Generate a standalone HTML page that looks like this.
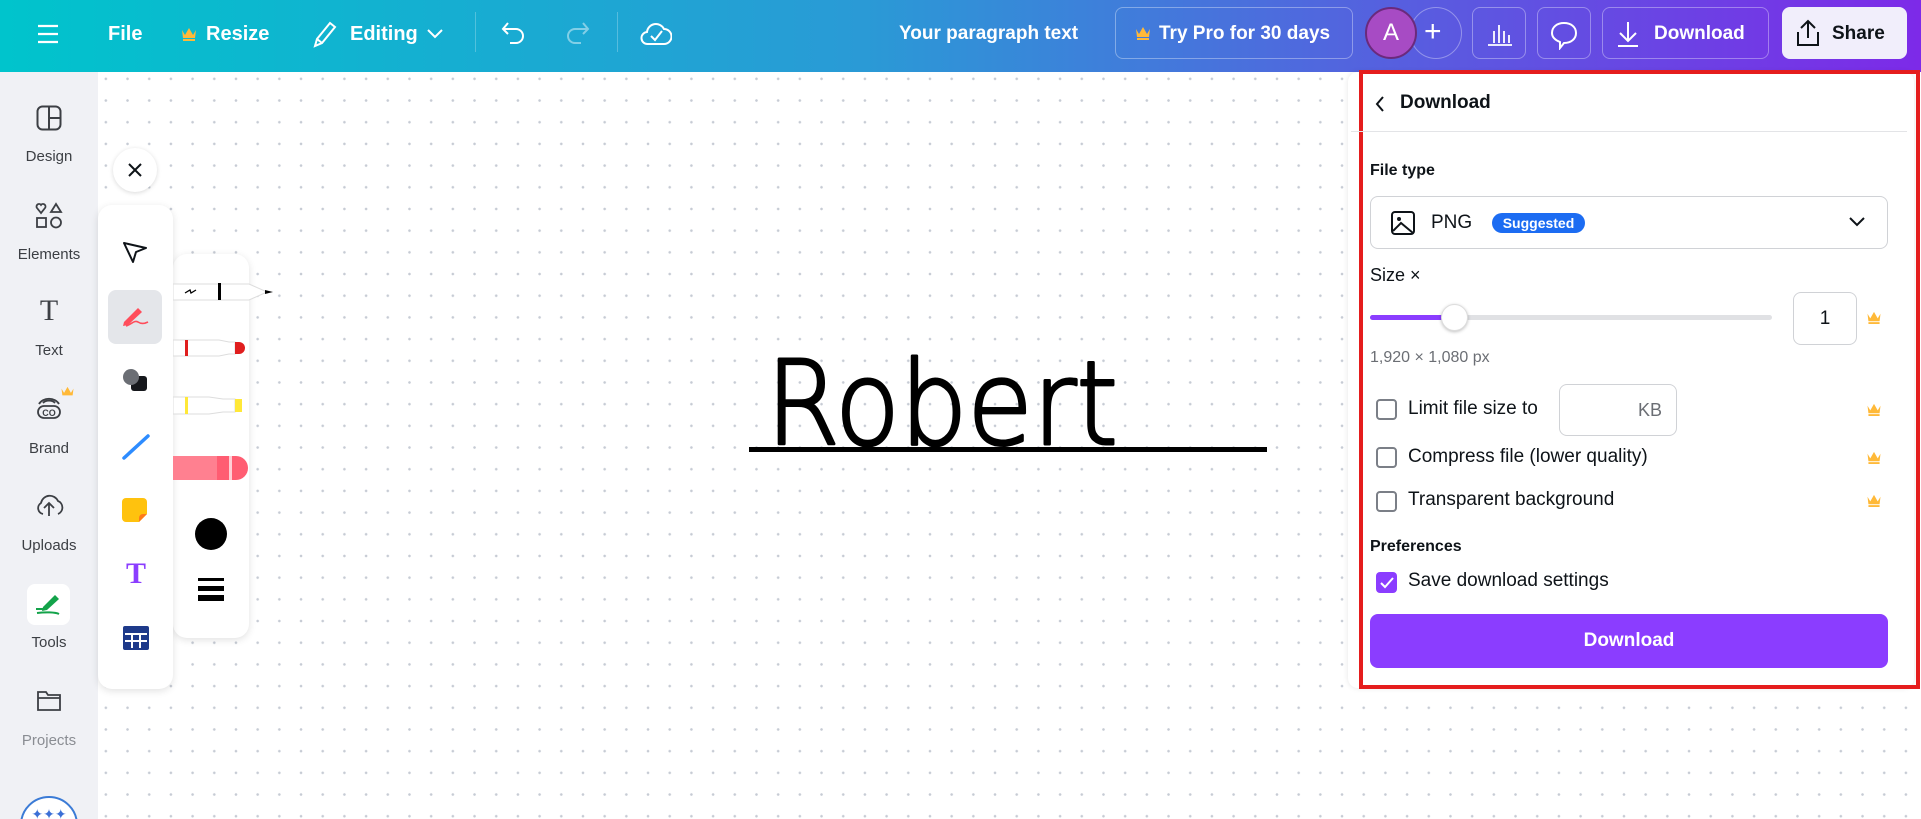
<!DOCTYPE html>
<html><head><meta charset="utf-8">
<style>
*{box-sizing:border-box;margin:0;padding:0}
html,body{width:1921px;height:819px;overflow:hidden}
body{font-family:"Liberation Sans",sans-serif;background:#fff;position:relative}
.top{position:absolute;left:0;top:0;width:1921px;height:72px;background:linear-gradient(90deg,#00c4cc 0%,#2a9ad6 45%,#5a5ae0 75%,#7d2ae8 100%);color:#fff}
.top .t{position:absolute;top:0;line-height:68px;font-size:20px;font-weight:bold}
.vd{position:absolute;top:12px;width:1px;height:40px;background:rgba(255,255,255,.25)}
.ob{position:absolute;top:7px;height:52px;border:1px solid rgba(255,255,255,.35);border-radius:8px}
.side{position:absolute;left:0;top:72px;width:98px;height:747px;background:#f0f1f5;overflow:hidden}
.si{position:absolute;left:0;width:98px;text-align:center;font-size:15px;color:#3c3f44}
.canvas{position:absolute;left:98px;top:72px;width:1823px;height:747px;background-color:#fff;background-image:radial-gradient(circle,#c6cbd4 1.1px,transparent 1.5px);background-size:21.7px 21.7px;background-position:-3px -4px}
.panel{position:absolute;background:#fff;border-radius:14px;box-shadow:0 2px 8px rgba(0,0,0,.12)}
.dp{position:absolute;left:1348px;top:72px;width:566px;height:616px;background:#fff;border-radius:10px;box-shadow:0 0 6px rgba(0,0,0,.1)}
.red{position:absolute;left:1359px;top:70px;width:561px;height:619px;border:4px solid #e51d1d}
.lbl{position:absolute;font-size:17px;color:#0e1318}
.cb{position:absolute;left:1376px;width:21px;height:21px;border:2px solid #7b7f87;border-radius:4px}
.crown{position:absolute;width:16px;height:13px}
</style></head><body>
<div class="top">
  <svg style="position:absolute;left:37px;top:24px" width="22" height="20"><path d="M1 2H21M1 10H21M1 18H21" stroke="#fff" stroke-width="2.2"/></svg>
  <div class="t" style="left:108px">File</div>
  <svg style="position:absolute;left:181px;top:27px" width="16" height="14" viewBox="0 0 16 14"><path d="M1 3L4 8L8 1L12 8L15 3L14 11H2Z" fill="#ffb938"/><rect x="2" y="12" width="12" height="2" fill="#ffb938"/></svg>
  <div class="t" style="left:206px">Resize</div>
  <svg style="position:absolute;left:311px;top:20px" width="26" height="28" viewBox="0 0 26 28"><path d="M4 26L6 19L19 3L24 7L11 23Z M6 19L11 23" fill="none" stroke="#fff" stroke-width="2"/></svg>
  <div class="t" style="left:350px">Editing</div>
  <svg style="position:absolute;left:426px;top:28px" width="18" height="12"><path d="M2 2L9 9L16 2" fill="none" stroke="#fff" stroke-width="2"/></svg>
  <div class="vd" style="left:475px"></div>
  <svg style="position:absolute;left:500px;top:20px" width="28" height="28" viewBox="0 0 28 28"><path d="M8 3L3 9L8 14M3 9H16A7 7 0 0 1 16 23H10" fill="none" stroke="#fff" stroke-width="2"/></svg>
  <svg style="position:absolute;left:563px;top:20px" width="28" height="28" viewBox="0 0 28 28"><path d="M20 3L25 9L20 14M25 9H12A7 7 0 0 0 12 23H18" fill="none" stroke="rgba(255,255,255,.45)" stroke-width="2"/></svg>
  <div class="vd" style="left:617px"></div>
  <svg style="position:absolute;left:640px;top:18px" width="32" height="30" viewBox="0 0 32 30"><path d="M8 26A6 6 0 0 1 7 14A9 9 0 0 1 24 11A7 7 0 0 1 24 26Z" fill="none" stroke="#fff" stroke-width="2"/><path d="M11 18L15 22L22 13" fill="none" stroke="#fff" stroke-width="2"/></svg>
  <div class="t" style="left:899px;font-weight:bold;font-size:19px">Your paragraph text</div>
  <div class="ob" style="left:1115px;width:238px"></div>
  <svg style="position:absolute;left:1135px;top:26px" width="16" height="14" viewBox="0 0 16 14"><path d="M1 3L4 8L8 1L12 8L15 3L14 11H2Z" fill="#ffb938"/><rect x="2" y="12" width="12" height="2" fill="#ffb938"/></svg>
  <div class="t" style="left:1159px;font-size:19px">Try Pro for 30 days</div>
  <div style="position:absolute;left:1410px;top:7px;width:52px;height:52px;border:1px solid rgba(255,255,255,.35);border-radius:50%"></div>
  <div style="position:absolute;left:1365px;top:7px;width:52px;height:52px;border-radius:50%;background:#a74bc4;border:2px solid #6a2a7c;text-align:center;line-height:48px;font-size:24px">A</div>
  <div class="t" style="left:1424px;font-size:30px;font-weight:normal;line-height:64px">+</div>
  <div class="ob" style="left:1472px;width:54px"></div>
  <svg style="position:absolute;left:1487px;top:21px" width="26" height="26"><path d="M1 24H25M7 22V10M12 22V4M17 22V10M22 22V14" stroke="#fff" stroke-width="1.8" fill="none"/></svg>
  <div class="ob" style="left:1537px;width:54px"></div>
  <svg style="position:absolute;left:1550px;top:20px" width="28" height="30"><path d="M14 3C21 3 26 7 26 13C26 19 21 23 14 23L10 28V22C5 20 2 17 2 13C2 7 7 3 14 3Z" fill="none" stroke="#fff" stroke-width="2"/></svg>
  <div class="ob" style="left:1602px;width:167px"></div>
  <svg style="position:absolute;left:1616px;top:20px" width="24" height="28"><path d="M12 2V20M4 13L12 21L20 13M2 26H22" stroke="#fff" stroke-width="2" fill="none"/></svg>
  <div class="t" style="left:1654px;font-size:19px">Download</div>
  <div style="position:absolute;left:1782px;top:7px;width:125px;height:52px;background:#f1eefb;border-radius:8px"></div>
  <svg style="position:absolute;left:1796px;top:19px" width="24" height="28"><path d="M12 19V3M5 9L12 2L19 9M2 13V26H22V13" stroke="#0e1318" stroke-width="2" fill="none"/></svg>
  <div class="t" style="left:1832px;font-size:19px;color:#0e1318">Share</div>
</div>

<div class="side">
  <svg style="position:absolute;left:36px;top:33px" width="26" height="26"><rect x="1.5" y="1.5" width="23" height="23" rx="5" fill="none" stroke="#3c3f44" stroke-width="2"/><path d="M13 2V24M13 13H24" stroke="#3c3f44" stroke-width="2"/></svg>
  <div class="si" style="top:76px">Design</div>
  <svg style="position:absolute;left:35px;top:130px" width="28" height="28"><path d="M6 11L2 6A2.5 2.5 0 0 1 6 3A2.5 2.5 0 0 1 10 6Z" fill="none" stroke="#3c3f44" stroke-width="1.8"/><path d="M21 2L26 10H16Z" fill="none" stroke="#3c3f44" stroke-width="1.8"/><rect x="2" y="16" width="9" height="9" fill="none" stroke="#3c3f44" stroke-width="1.8"/><circle cx="21" cy="20.5" r="5" fill="none" stroke="#3c3f44" stroke-width="1.8"/></svg>
  <div class="si" style="top:174px">Elements</div>
  <div class="si" style="top:222px;font-size:30px;font-family:'Liberation Serif',serif;color:#3c3f44">T</div>
  <div class="si" style="top:270px">Text</div>
  <svg style="position:absolute;left:35px;top:322px" width="28" height="26"><path d="M4 10A11 9 0 0 1 24 10" fill="none" stroke="#3c3f44" stroke-width="1.8"/><path d="M8 9A7 5 0 0 1 20 9" fill="none" stroke="#3c3f44" stroke-width="1.8"/><rect x="3" y="12" width="22" height="12" rx="6" fill="none" stroke="#3c3f44" stroke-width="1.8"/><text x="14" y="22" font-size="9" font-weight="bold" text-anchor="middle" fill="#3c3f44" font-family="Liberation Sans">CO</text></svg>
  <svg style="position:absolute;left:60px;top:314px" width="15" height="12" viewBox="0 0 16 14"><path d="M1 3L4 8L8 1L12 8L15 3L14 11H2Z" fill="#ffb938"/></svg>
  <div class="si" style="top:368px">Brand</div>
  <svg style="position:absolute;left:34px;top:420px" width="30" height="26"><path d="M9 22A6 6 0 0 1 7 11A9 9 0 0 1 24 9A7 7 0 0 1 24 22" fill="none" stroke="#3c3f44" stroke-width="1.8"/><path d="M15 24V12M10 16L15 11L20 16" fill="none" stroke="#3c3f44" stroke-width="1.8"/></svg>
  <div class="si" style="top:465px">Uploads</div>
  <div style="position:absolute;left:27px;top:512px;width:43px;height:41px;background:#fff;border-radius:8px"></div>
  <svg style="position:absolute;left:33px;top:518px" width="32" height="28"><path d="M10 17L22 5L26 9L14 20L9 21Z" fill="#13a34a"/><path d="M3 19H11M4 23C12 22 22 22 26 24" stroke="#13a34a" stroke-width="2" fill="none"/></svg>
  <div class="si" style="top:562px">Tools</div>
  <svg style="position:absolute;left:36px;top:616px" width="26" height="24"><path d="M2 4H10L12 7H24V22H2Z M2 10H24" fill="none" stroke="#3c3f44" stroke-width="1.8"/></svg>
  <div class="si" style="top:660px;color:#8a8d93">Projects</div>
  <div style="position:absolute;left:20px;top:724px;width:58px;height:58px;border-radius:50%;border:2px solid #3b7bd6;background:#fff;text-align:center;color:#3b6fd6;font-size:14px;padding-top:8px">✦✦✦</div>
</div>

<div class="canvas"></div>

<svg style="position:absolute;left:740px;top:340px" width="540" height="120">
  <text x="26" y="104" font-family="DejaVu Sans, sans-serif" font-size="116" font-weight="200" fill="#000" stroke="#000" stroke-width="3" stroke-linejoin="round" textLength="352" lengthAdjust="spacingAndGlyphs">Robert</text>
  <rect x="9" y="107" width="518" height="5" fill="#000"/>
</svg>

<div style="position:absolute;left:113px;top:148px;width:44px;height:44px;border-radius:50%;background:#fff;box-shadow:0 1px 5px rgba(0,0,0,.15)"></div>
<svg style="position:absolute;left:128px;top:163px" width="14" height="14"><path d="M1 1L13 13M13 1L1 13" stroke="#0e1318" stroke-width="2"/></svg>

<div class="panel" style="left:173px;top:254px;width:76px;height:384px"></div>
<div class="panel" style="left:98px;top:205px;width:75px;height:484px"></div>
<svg style="position:absolute;left:122px;top:240px" width="26" height="24"><path d="M2 3L24 8L14 12L11 22Z" fill="none" stroke="#0e1318" stroke-width="2" stroke-linejoin="round"/></svg>
<div style="position:absolute;left:108px;top:290px;width:54px;height:54px;background:#e4e6ea;border-radius:8px"></div>
<svg style="position:absolute;left:120px;top:302px" width="32" height="30"><path d="M4 20L18 6L22 10L8 23L3 24Z" fill="#ff4d5b"/><path d="M6 24C12 22 14 18 18 20C21 22 24 22 28 20" stroke="#ff4d5b" stroke-width="1.6" fill="none"/></svg>
<svg style="position:absolute;left:120px;top:366px" width="30" height="28"><rect x="11" y="10" width="16" height="15" rx="3" fill="#16181c"/><circle cx="11" cy="11" r="8" fill="#6b6e74"/></svg>
<svg style="position:absolute;left:121px;top:433px" width="30" height="28"><path d="M3 25L27 3" stroke="#2d8cff" stroke-width="3.5" stroke-linecap="round"/></svg>
<svg style="position:absolute;left:122px;top:497px" width="28" height="28"><path d="M4 1H21A4 4 0 0 1 25 5V17L17 25H4A4 4 0 0 1 0 21V5A4 4 0 0 1 4 1Z" fill="#ffc20e"/><path d="M25 17L17 25V21A4 4 0 0 1 21 17Z" fill="#ff7a1a"/></svg>
<div style="position:absolute;left:121px;top:557px;width:30px;text-align:center;font-size:30px;font-weight:bold;color:#8b3dff;font-family:'Liberation Serif',serif">T</div>
<svg style="position:absolute;left:123px;top:626px" width="26" height="24"><rect x="0" y="0" width="26" height="24" rx="2" fill="#1e3a8a"/><path d="M2 8H24M2 15H24M9 8V22M17 8V22" stroke="#fff" stroke-width="2"/></svg>

<svg style="position:absolute;left:173px;top:280px" width="100" height="210">
  <path d="M0 4H76L94 12L76 20H0Z" fill="#fff" stroke="#ddd"/><path d="M92 10L100 12L92 14Z" fill="#000"/><rect x="45" y="3" width="3" height="17" fill="#000"/><path d="M12 13L17 10L18 13L23 10" stroke="#000" fill="none" stroke-width="1.3"/>
  <path d="M0 60H46L56 62H62L62 74H56L46 76H0Z" fill="#fff" stroke="#ddd"/><path d="M62 62H66A6 6 0 0 1 66 74H62Z" fill="#e01e1e"/><rect x="12" y="60" width="3" height="16" fill="#e01e1e"/>
  <path d="M0 117H36L50 119H62V132H50L36 134H0Z" fill="#fff" stroke="#ddd"/><rect x="62" y="119" width="7" height="13" fill="#ffe838"/><rect x="12" y="117" width="3" height="17" fill="#ffe838"/>
  <rect x="0" y="176" width="62" height="24" fill="#ff8090"/><rect x="44" y="176" width="18" height="24" fill="#ff5d72"/><rect x="56" y="176" width="3" height="24" fill="#fff" opacity=".7"/><path d="M62 176H63A3 3 0 0 1 63 200H62Z" fill="#ff5d72"/>
</svg>
<div style="position:absolute;left:195px;top:518px;width:32px;height:32px;border-radius:50%;background:#000"></div>
<svg style="position:absolute;left:198px;top:577px" width="26" height="24"><rect x="0" y="1" width="26" height="3" fill="#000"/><rect x="0" y="9" width="26" height="5" fill="#000"/><rect x="0" y="18" width="26" height="6" fill="#000"/></svg>

<div class="dp"></div>
<div class="red"></div>
<svg style="position:absolute;left:1374px;top:95px" width="12" height="18"><path d="M9 2L3 9L9 16" fill="none" stroke="#0e1318" stroke-width="2"/></svg>
<div class="lbl" style="left:1400px;top:92px;font-size:19px;font-weight:bold">Download</div>
<div style="position:absolute;left:1351px;top:131px;width:556px;height:1px;background:#e3e4e7"></div>
<div class="lbl" style="left:1370px;top:162px;font-weight:bold;font-size:16px">File type</div>
<div style="position:absolute;left:1370px;top:196px;width:518px;height:53px;border:1px solid #d0d2d6;border-radius:8px"></div>
<svg style="position:absolute;left:1391px;top:211px" width="24" height="24"><rect x="1" y="1" width="22" height="22" rx="3" fill="none" stroke="#0e1318" stroke-width="2"/><circle cx="8" cy="8" r="2" fill="#0e1318"/><path d="M2 20L10 12L22 22" fill="none" stroke="#0e1318" stroke-width="2"/></svg>
<div class="lbl" style="left:1431px;top:212px;font-size:19px">PNG</div>
<div style="position:absolute;left:1492px;top:213px;width:93px;height:20px;border-radius:10px;background:#1c6cf2;color:#fff;font-size:14px;font-weight:bold;text-align:center;line-height:20px">Suggested</div>
<svg style="position:absolute;left:1848px;top:216px" width="18" height="12"><path d="M2 2L9 9L16 2" fill="none" stroke="#0e1318" stroke-width="2"/></svg>
<div class="lbl" style="left:1370px;top:265px;font-size:18px">Size ×</div>
<div style="position:absolute;left:1370px;top:315px;width:402px;height:5px;background:#e0e1e4;border-radius:3px"></div>
<div style="position:absolute;left:1370px;top:315px;width:84px;height:5px;background:#8b3dff;border-radius:3px"></div>
<div style="position:absolute;left:1441px;top:304px;width:27px;height:27px;border-radius:50%;background:#fff;border:1px solid #ddd;box-shadow:0 1px 3px rgba(0,0,0,.25)"></div>
<div style="position:absolute;left:1793px;top:292px;width:64px;height:53px;border:1px solid #d0d2d6;border-radius:8px;text-align:center;line-height:51px;font-size:19px;color:#0e1318">1</div>
<div class="lbl" style="left:1370px;top:349px;font-size:16px;color:#6b6e74">1,920 × 1,080 px</div>
<div class="cb" style="top:399px"></div>
<div class="lbl" style="left:1408px;top:398px;font-size:19px">Limit file size to</div>
<div style="position:absolute;left:1559px;top:384px;width:118px;height:52px;border:1px solid #d0d2d6;border-radius:8px;text-align:right;padding-right:14px;line-height:50px;font-size:18px;color:#6b6e74">KB</div>
<div class="cb" style="top:447px"></div>
<div class="lbl" style="left:1408px;top:446px;font-size:19px">Compress file (lower quality)</div>
<div class="cb" style="top:491px"></div>
<div class="lbl" style="left:1408px;top:489px;font-size:19px">Transparent background</div>
<svg class="crown" style="left:1866px;top:403px" viewBox="0 0 16 14"><path d="M1 3L4 8L8 1L12 8L15 3L14 11H2Z" fill="#ffb938"/><rect x="2" y="12" width="12" height="2" fill="#ffb938"/></svg>
<svg class="crown" style="left:1866px;top:451px" viewBox="0 0 16 14"><path d="M1 3L4 8L8 1L12 8L15 3L14 11H2Z" fill="#ffb938"/><rect x="2" y="12" width="12" height="2" fill="#ffb938"/></svg>
<svg class="crown" style="left:1866px;top:494px" viewBox="0 0 16 14"><path d="M1 3L4 8L8 1L12 8L15 3L14 11H2Z" fill="#ffb938"/><rect x="2" y="12" width="12" height="2" fill="#ffb938"/></svg>
<svg class="crown" style="left:1866px;top:311px" viewBox="0 0 16 14"><path d="M1 3L4 8L8 1L12 8L15 3L14 11H2Z" fill="#ffb938"/><rect x="2" y="12" width="12" height="2" fill="#ffb938"/></svg>
<div class="lbl" style="left:1370px;top:538px;font-weight:bold;font-size:16px">Preferences</div>
<div style="position:absolute;left:1376px;top:572px;width:21px;height:21px;border-radius:4px;background:#8b3dff"></div>
<svg style="position:absolute;left:1379px;top:575px" width="16" height="16"><path d="M2 8L6 12L14 3" fill="none" stroke="#fff" stroke-width="2"/></svg>
<div class="lbl" style="left:1408px;top:570px;font-size:19px">Save download settings</div>
<div style="position:absolute;left:1370px;top:614px;width:518px;height:54px;border-radius:8px;background:#8b3dff;color:#fff;font-weight:bold;font-size:19px;text-align:center;line-height:54px">Download</div>
</body></html>
